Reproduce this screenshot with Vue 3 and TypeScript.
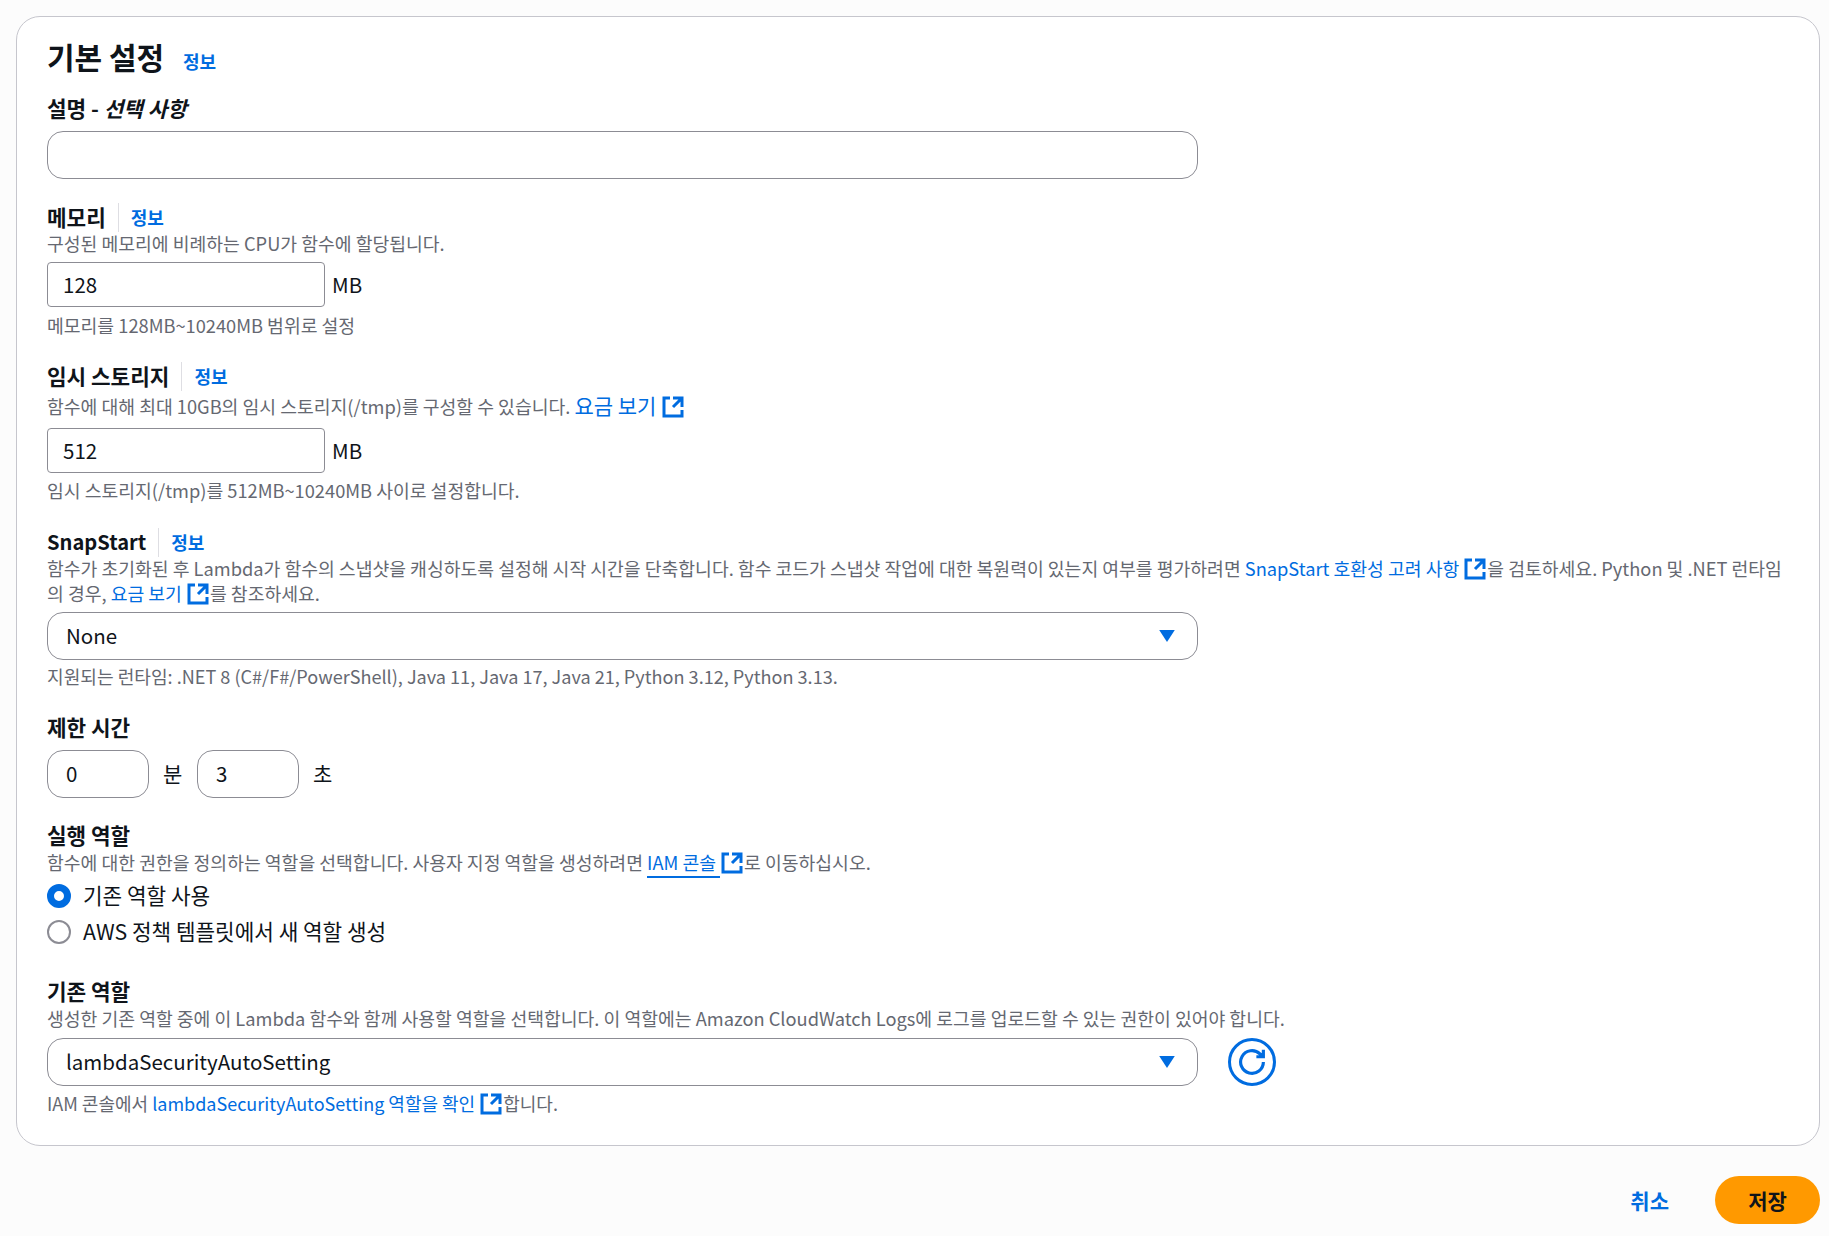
<script setup lang="ts">
const chevron = 'M2.8 4h10.4L8 12 2.8 4z'
</script>

<template>
  <main class="page">
    <section class="card">
      <h2 class="title">기본 설정 <a class="info big">정보</a></h2>

      <div class="field f-desc">
        <div class="label"><b>설명 - <i>선택 사항</i></b></div>
        <div class="box round wide"></div>
      </div>

      <div class="field f-mem">
        <div class="label"><b>메모리</b><span class="sep"></span><a class="info">정보</a></div>
        <p class="desc">구성된 메모리에 비례하는 CPU가 함수에 할당됩니다.</p>
        <div class="unit-row">
          <div class="box square num">128</div><span class="unit">MB</span>
        </div>
        <p class="desc hint">메모리를 128MB~10240MB 범위로 설정</p>
      </div>

      <div class="field f-tmp">
        <div class="label"><b>임시 스토리지</b><span class="sep"></span><a class="info">정보</a></div>
        <p class="desc tall">함수에 대해 최대 10GB의 임시 스토리지(/tmp)를 구성할 수 있습니다. <a class="link big-link">요금 보기 <svg class="ext" viewBox="0 0 16 16"><path d="M14 8.01v-6H8M14.02 2 8 8.01M6 2.01H2v12h12v-3.99" /></svg></a></p>
        <div class="unit-row">
          <div class="box square num">512</div><span class="unit">MB</span>
        </div>
        <p class="desc hint">임시 스토리지(/tmp)를 512MB~10240MB 사이로 설정합니다.</p>
      </div>

      <div class="field f-snap">
        <div class="label"><b>SnapStart</b><span class="sep"></span><a class="info">정보</a></div>
        <p class="desc">함수가 초기화된 후 Lambda가 함수의 스냅샷을 캐싱하도록 설정해 시작 시간을 단축합니다. 함수 코드가 스냅샷 작업에 대한 복원력이 있는지 여부를 평가하려면 <a class="link">SnapStart 호환성 고려 사항 <svg class="ext" viewBox="0 0 16 16"><path d="M14 8.01v-6H8M14.02 2 8 8.01M6 2.01H2v12h12v-3.99" /></svg></a>을 검토하세요. Python 및 .NET 런타임의 경우, <a class="link">요금 보기 <svg class="ext" viewBox="0 0 16 16"><path d="M14 8.01v-6H8M14.02 2 8 8.01M6 2.01H2v12h12v-3.99" /></svg></a>를 참조하세요.</p>
        <div class="box round wide select">
          <span>None</span>
          <svg class="caret" viewBox="0 0 16 16"><path :d="chevron" /></svg>
        </div>
        <p class="desc hint">지원되는 런타임: .NET 8 (C#/F#/PowerShell), Java 11, Java 17, Java 21, Python 3.12, Python 3.13.</p>
      </div>

      <div class="field f-time">
        <div class="label"><b>제한 시간</b></div>
        <div class="time-row">
          <div class="box round time">0</div><span class="time-unit">분</span>
          <div class="box round time">3</div><span class="time-unit">초</span>
        </div>
      </div>

      <div class="field f-role">
        <div class="label"><b>실행 역할</b></div>
        <p class="desc">함수에 대한 권한을 정의하는 역할을 선택합니다. 사용자 지정 역할을 생성하려면 <a class="link under">IAM 콘솔 </a><a class="link"><svg class="ext" viewBox="0 0 16 16"><path d="M14 8.01v-6H8M14.02 2 8 8.01M6 2.01H2v12h12v-3.99" /></svg></a>로 이동하십시오.</p>
        <div class="radios">
          <label class="radio"><span class="dot on"></span>기존 역할 사용</label>
          <label class="radio"><span class="dot"></span>AWS 정책 템플릿에서 새 역할 생성</label>
        </div>
      </div>

      <div class="field f-exist">
        <div class="label"><b>기존 역할</b></div>
        <p class="desc">생성한 기존 역할 중에 이 Lambda 함수와 함께 사용할 역할을 선택합니다. 이 역할에는 Amazon CloudWatch Logs에 로그를 업로드할 수 있는 권한이 있어야 합니다.</p>
        <div class="select-row">
          <div class="box round wide select">
            <span>lambdaSecurityAutoSetting</span>
            <svg class="caret" viewBox="0 0 16 16"><path :d="chevron" /></svg>
          </div>
          <button class="refresh" type="button" aria-label="새로 고침">
            <svg viewBox="0 0 16 16"><path d="M14.5 8A6.5 6.5 0 1 1 12.5 3.3L14.5 5M14.5 1v4h-4" /></svg>
          </button>
        </div>
        <p class="desc hint">IAM 콘솔에서 <a class="link">lambdaSecurityAutoSetting 역할을 확인 <svg class="ext" viewBox="0 0 16 16"><path d="M14 8.01v-6H8M14.02 2 8 8.01M6 2.01H2v12h12v-3.99" /></svg></a>합니다.</p>
      </div>
    </section>

    <footer class="actions">
      <a class="cancel">취소</a>
      <button class="save" type="button">저장</button>
    </footer>
  </main>
</template>

<style>
html, body { margin: 0; background: #fcfcfc; }
</style>

<style scoped>
.page {
  box-sizing: border-box;
  width: 1829px;
  height: 1236px;
  padding: 16px 9px 0 16px;
  font-family: "Noto Sans CJK KR", "Noto Sans", sans-serif;
  color: #0f141a;
  background: #fcfcfc;
  overflow: hidden;
}
.card {
  box-sizing: border-box;
  height: 1130px;
  padding: 19px 30px 0 30px;
  background: #fff;
  border: 1px solid #c6c6cd;
  border-radius: 24px;
}
.title {
  margin: 0;
  height: 40px;
  font-size: 30px;
  line-height: 40px;
  font-weight: 700;
}
.info {
  color: #006ce0;
  font-size: 18px;
  font-weight: 700;
  line-height: 28px;
}
.info.big { margin-left: 12px; }
.field { display: flex; flex-direction: column; }
.label {
  display: flex;
  align-items: center;
  height: 28px;
  font-size: 21.3px;
  line-height: 28px;
}
.label b { font-weight: 700; }
.f-snap .label b { font-size: 20.1px; }
.sep {
  width: 1px;
  height: 29px;
  margin: 0 12px;
  background: #dedee3;
}
.desc {
  margin: 0;
  font-size: 18.25px;
  line-height: 24px;
  color: #656871;
}
.desc.tall { line-height: 30px; }
.link { color: #006ce0; }
.big-link { font-size: 21px; }
.under { border-bottom: 2px solid #006ce0; padding-bottom: 1px; }
.ext {
  display: inline-block;
  width: 24px;
  height: 24px;
  vertical-align: -5px;
  fill: none;
  stroke: #006ce0;
  stroke-width: 2;
}
.box {
  box-sizing: border-box;
  display: flex;
  align-items: center;
  padding-bottom: 2px;
  background: #fff;
  border: 1px solid #8c8c94;
  font-size: 20.5px;
}
.round { height: 48px; border-radius: 16px; }
.wide { width: 1151px; }
.square { width: 278px; height: 45px; border-radius: 4px; }
.num { padding-left: 15px; }
.select { justify-content: space-between; padding: 0 18px 2px 18px; }
.caret { width: 24px; height: 24px; margin-top: 2px; fill: #006ce0; }
.unit-row { display: flex; align-items: center; gap: 7px; margin-top: 7px; }
.unit { padding-bottom: 2px; font-size: 20.5px; }
.hint { margin-top: 6px; }
.f-desc { margin-top: 19px; }
.f-desc .label { height: 26px; margin-bottom: 10px; }
.f-mem { margin-top: 24px; }
.f-tmp { margin-top: 25px; }
.f-tmp .hint { margin-top: 5px; }
.f-snap { margin-top: 26px; }
.f-snap .select { margin-top: 6px; }
.f-snap .hint { margin-top: 4px; font-size: 18.1px; }
.f-time { margin-top: 25px; }
.time-row { display: flex; align-items: center; margin-top: 9px; }
.time { width: 102px; padding-left: 18px; }
.time-unit { width: 48px; padding: 0 0 2px 14px; box-sizing: border-box; font-size: 21px; }
.f-role { margin-top: 23px; }
.f-role .desc { padding-top: 1px; }
.radios { display: flex; flex-direction: column; gap: 12px; margin-top: 9px; }
.radio { display: flex; align-items: flex-start; gap: 12px; height: 24px; font-size: 21.3px; line-height: 22px; }
.dot {
  box-sizing: border-box;
  width: 24px;
  height: 24px;
  border-radius: 50%;
  border: 2px solid #8c8c94;
  background: #fff;
}
.dot.on { border: 7.5px solid #006ce0; }
.f-exist { margin-top: 33px; }
.f-exist .desc { padding-top: 1px; }
.select-row { display: flex; align-items: center; gap: 30px; margin-top: 8px; }
.f-exist .hint { margin-top: 4px; font-size: 18px; }
.refresh {
  box-sizing: border-box;
  width: 48px;
  height: 48px;
  padding: 0;
  display: flex;
  align-items: center;
  justify-content: center;
  background: #fff;
  border: 3px solid #006ce0;
  border-radius: 50%;
}
.refresh svg { width: 28px; height: 28px; fill: none; stroke: #006ce0; stroke-width: 1.8; }
.actions {
  display: flex;
  justify-content: flex-end;
  align-items: center;
  gap: 46px;
  margin-top: 30px;
}
.cancel { color: #006ce0; font-size: 21px; font-weight: 700; }
.save {
  width: 105px;
  height: 48px;
  border: 0;
  border-radius: 24px;
  background: #ff9900;
  color: #0f141a;
  font-family: inherit;
  font-size: 21px;
  font-weight: 700;
}
</style>
